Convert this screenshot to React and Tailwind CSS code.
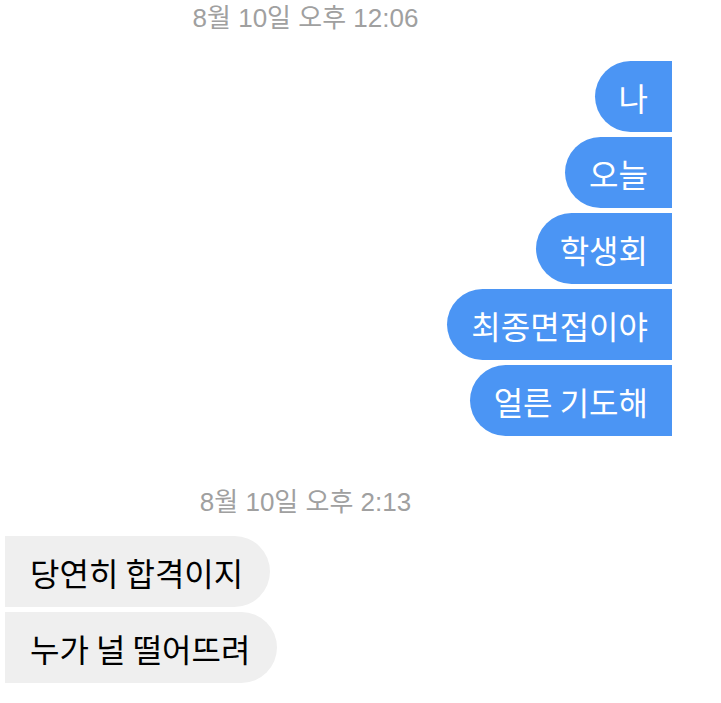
const font = { fontFamily: '"Noto Sans CJK KR", "Noto Sans", sans-serif' };
const stampFont = { fontFamily: '"Liberation Sans", "Noto Sans CJK KR", sans-serif' };

const sent = [
    { text: "나", shape: "rounded-l-full rounded-tr-[28px] rounded-br-[8px]" },
    { text: "오늘", shape: "rounded-l-full rounded-r-[8px]" },
    { text: "학생회", shape: "rounded-l-full rounded-r-[8px]" },
    { text: "최종면접이야", shape: "rounded-l-full rounded-r-[8px]" },
    { text: "얼른 기도해", shape: "rounded-l-full rounded-tr-[8px] rounded-br-[30px]" },
];

const received = [
    { text: "당연히 합격이지", shape: "rounded-r-full rounded-tl-[28px] rounded-bl-[6px]" },
    { text: "누가 널 떨어뜨려", shape: "rounded-r-full rounded-tl-[6px] rounded-bl-[28px]" },
];

function Stamp({ children, className = "" }) {
    return (
        <div
            className={`flex h-[36px] items-center justify-center pr-[110px] text-[26px] text-[#a0a0a0] ${className}`}
            style={stampFont}
        >
            {children}
        </div>
    );
}

export default function App() {
    return (
        <div className="w-[721px] h-[703px] overflow-hidden bg-white" style={font}>
            <Stamp>8월 10일 오후 12:06</Stamp>

            {/* my messages */}
            <div className="mt-[25px] flex flex-col items-end gap-[5px] pr-[49px]">
                {sent.map((m) => (
                    <div
                        key={m.text}
                        className={`flex h-[71px] min-w-[77px] items-center justify-center bg-[#4b95f4] px-[24px] text-[32px] text-white ${m.shape}`}
                    >
                        {m.text}
                    </div>
                ))}
            </div>

            <Stamp className="mt-[48px]">8월 10일 오후 2:13</Stamp>

            {/* their messages */}
            <div className="mt-[16px] flex flex-col items-start gap-[5px] pl-[5px]">
                {received.map((m) => (
                    <div
                        key={m.text}
                        className={`flex h-[71px] items-center bg-[#efefef] pl-[25px] pr-[27px] text-[32px] text-black ${m.shape}`}
                    >
                        {m.text}
                    </div>
                ))}
            </div>
        </div>
    );
}
